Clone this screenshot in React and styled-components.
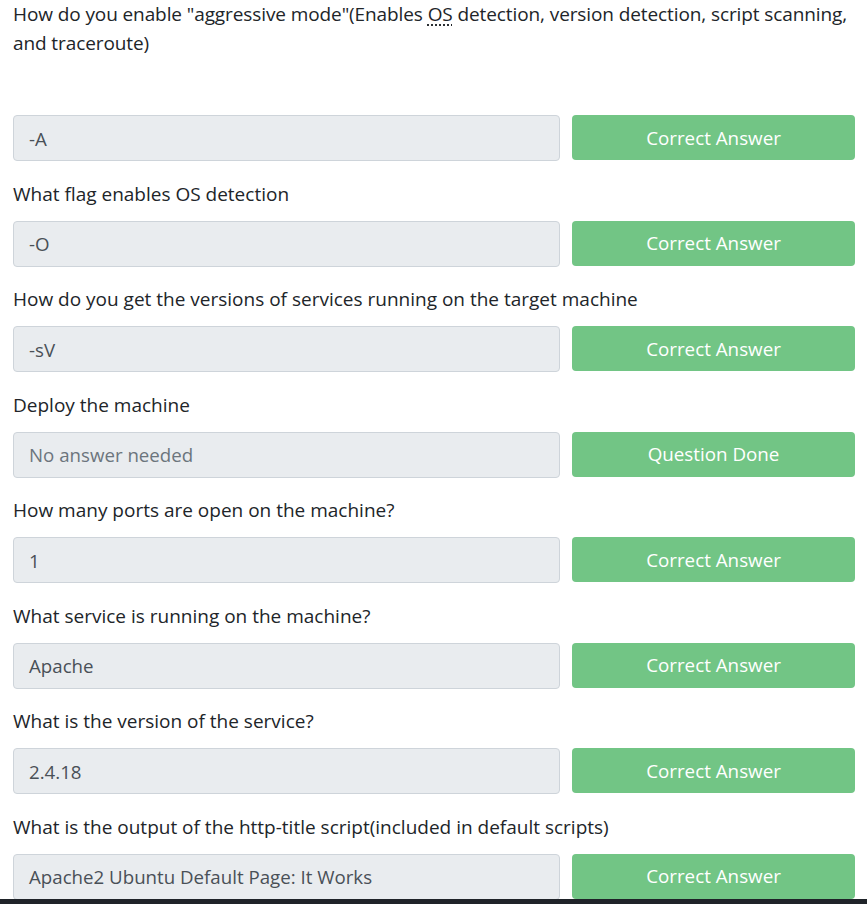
import React from 'react';
import styled, { createGlobalStyle } from 'styled-components';

const GlobalStyle = createGlobalStyle`
  body {
    margin: 0;
    background: #ffffff;
    font-family: "Open Sans", "Noto Sans", sans-serif;
    color: #212529;
  }
`;

const questions = [
  { text: 'What flag enables OS detection', answer: '-O' },
  { text: 'How do you get the versions of services running on the target machine', answer: '-sV' },
  { text: 'Deploy the machine', answer: 'No answer needed', done: true },
  { text: 'How many ports are open on the machine?', answer: '1' },
  { text: 'What service is running on the machine?', answer: 'Apache' },
  { text: 'What is the version of the service?', answer: '2.4.18' },
  { text: 'What is the output of the http-title script(included in default scripts)', answer: 'Apache2 Ubuntu Default Page: It Works' },
];

const Page = styled.div`
  padding: 0 12px 0 13px;
`;

const Question = styled.p`
  margin: 0 0 ${(p) => (p.first ? '57px' : '13px')};
  font-size: 19px;
  line-height: ${(p) => (p.first ? '29px' : '27px')};
  color: #212529;
  letter-spacing: ${(p) => (p.first ? '-0.1px' : '0')};

  abbr {
    text-decoration: underline dotted;
    text-underline-offset: 4px;
    cursor: help;
  }
`;

const Row = styled.div`
  display: grid;
  grid-template-columns: 547px 1fr;
  gap: 12px;
  margin-bottom: 19.5px;
  height: 46px;
`;

const AnswerBox = styled.div`
  display: flex;
  align-items: center;
  box-sizing: border-box;
  height: 46px;
  padding: 0 15px;
  background: #e9ecef;
  border: 1px solid #ced4da;
  border-radius: 4px;
  font-size: 18.7px;
  color: ${(p) => (p.placeholder ? '#6c757d' : '#495057')};
`;

const SubmitButton = styled.button`
  height: 45px;
  border: none;
  border-radius: 4px;
  background: #72c585;
  color: #ffffff;
  font-family: inherit;
  font-size: 18.8px;
  cursor: pointer;
`;

const Taskbar = styled.div`
  position: fixed;
  left: 0;
  right: 0;
  bottom: 0;
  height: 5px;
  background: #1f2329;
`;

const QuestionRow = ({ answer, done }) => (
  <Row>
    <AnswerBox placeholder={done ? 1 : undefined}>{answer}</AnswerBox>
    <SubmitButton>{done ? 'Question Done' : 'Correct Answer'}</SubmitButton>
  </Row>
);

export default function App() {
  return (
    <>
      <GlobalStyle />
      <Page>
        <Question first>
          How do you enable "aggressive mode"(Enables <abbr title="Operating System">OS</abbr> detection, version
          detection, script scanning, and traceroute)
        </Question>
        <QuestionRow answer="-A" />
        {questions.map((q) => (
          <React.Fragment key={q.text}>
            <Question>{q.text}</Question>
            <QuestionRow answer={q.answer} done={q.done} />
          </React.Fragment>
        ))}
      </Page>
      <Taskbar />
    </>
  );
}
